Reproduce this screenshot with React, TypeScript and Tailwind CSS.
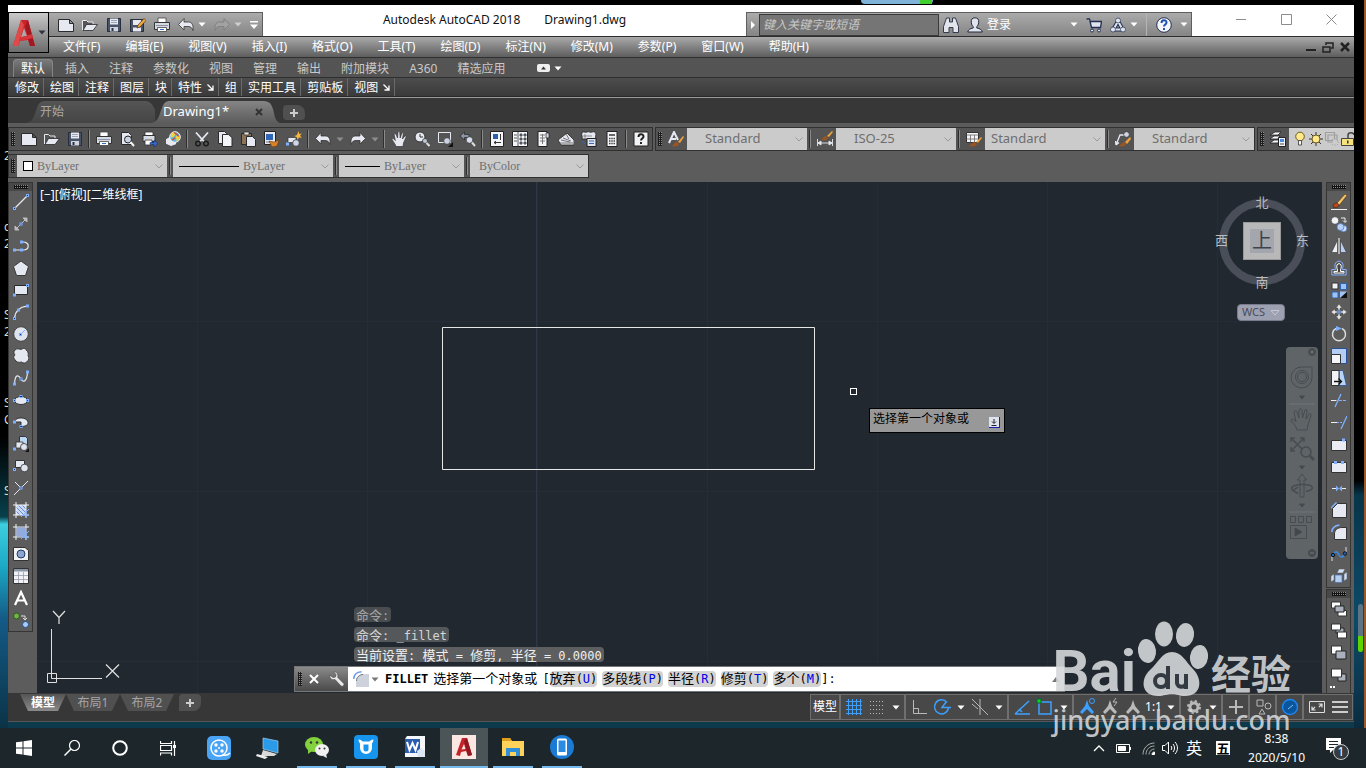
/**
 * CAD 工作區主畫面
 * 包含標題列、功能區、工具列、繪圖區、命令列與系統工作列
 */

import type { ReactNode } from 'react';

const LIGHT = '#e6e9f1';
const BLUE = '#7fb0ff';
const DARK = '#2a2a2a';

// 方形小節點，繪圖工具圖示共用
function Node({ x, y }: { x: number; y: number }) {
  return <rect x={x} y={y} width="2" height="2" fill="#123a8c" stroke={BLUE} strokeWidth="1" />;
}

// 圖示 (16x16)
const icons: Record<string, ReactNode> = {
  new: <path d="M.5 2.500h11l4 4v8H.500zM11.500 2.500v4h4" fill={LIGHT} stroke={DARK} />,
  open: (
    <>
      <path d="M.5 13V3.500h4l1.500 1.500h5v3" fill="#555" stroke={LIGHT} />
      <path d="M1 13.500 4.500 7.500h11L11 13.500z" fill={LIGHT} stroke={DARK} strokeWidth=".8" />
    </>
  ),
  save: (
    <>
      <path d="M1.500 1.500h13v13h-13z" fill="#4a5468" stroke="#262d3b" />
      <path d="M4 1.500h8v6H4z" fill={LIGHT} />
      <path d="M5 3.500h6M5 5.500h6" stroke="#8b93a5" strokeWidth=".8" />
      <path d="M4 10h8v4.500H4z" fill="#cfd4df" />
      <path d="M5.500 11h2v3h-2z" fill="#2b3345" />
    </>
  ),
  saveas: (
    <>
      <path d="M.5 2.500h13v12H.5z" fill="#4a5468" stroke="#262d3b" />
      <path d="M3 3h8v5H3zM3 10.500h8v4H3z" fill={LIGHT} />
      <path d="m7 11 1-3 6-6.500 2 2L10 10z" fill="#f3a93c" stroke="#4b3210" strokeWidth=".7" />
    </>
  ),
  print: (
    <>
      <path d="M4 1h8v5H4z" fill="#fff" stroke="#444" strokeWidth=".8" />
      <path d="M.5 5.500h15v7H.5z" fill="#d5d9e2" stroke="#333" />
      <path d="M2 8.500h12" stroke="#8a92a3" />
      <path d="M3.500 10.500h9v4h-9z" fill="#fff" stroke="#444" strokeWidth=".8" />
      <path d="M6 12.500h4" stroke="#2f6fc4" />
    </>
  ),
  undo: <path d="M6 1.500v3.500h4.500c3.500 0 5 3 4.500 8.500-1-2.500-2-4-5-4H6V13L.5 7.500z" fill={LIGHT} stroke="#333" strokeWidth=".8" />,
  redo: <path d="M10 1.500v3.500H5.500C2 5 .5 8 1 13.500c1-2.500 2-4 5-4h4V13l5.500-5.500z" fill={LIGHT} stroke="#333" strokeWidth=".8" />,
  redoOff: <path d="M10 1.500v3.500H5.500C2 5 .5 8 1 13.500c1-2.500 2-4 5-4h4V13l5.500-5.500z" fill="#a2a2a2" stroke="#7a7a7a" strokeWidth=".8" />,
  preview: (
    <>
      <path d="M2.500 1.500h7l3 3v9h-10z" fill={LIGHT} stroke={DARK} />
      <circle cx="9" cy="8.500" r="3.500" fill="#c9d3e4" stroke="#222" />
      <path d="m11.500 11 3.500 4" stroke="#f2f2f2" strokeWidth="2" />
    </>
  ),
  publish: (
    <>
      <path d="M3 1h8v4H3z" fill="#fff" stroke="#333" strokeWidth=".8" />
      <path d="M1 4.500h12v6H1z" fill="#d5d9e2" stroke="#333" />
      <path d="M3 9h7v5H3z" fill="#fff" stroke="#333" strokeWidth=".8" />
      <path d="M8 11.500h4V9l4 3.500-4 3.500v-2.500H8z" fill="#3568c8" stroke="#12275c" strokeWidth=".5" />
    </>
  ),
  globe: (
    <>
      <path d="m.5 8 5-3 6 2.500v6L6 15.500.5 13z" fill={LIGHT} stroke="#333" strokeWidth=".7" />
      <circle cx="10" cy="6" r="5.300" fill="#58b7e6" stroke="#f5f5f5" />
      <path d="M7 2c3-1 4 2 2 3.500S6 7 5.500 5zM11 5c3-1 4 0 3.500 3l-3 2.500z" fill="#f4d335" />
      <path d="M9 1.500c2 1 4 2 4.500 4M7 9l3-2" stroke="#e0402c" fill="none" strokeWidth="1.300" />
    </>
  ),
  cut: (
    <>
      <path d="M2 1.500 10.500 11M14 1.500 5.500 11" stroke={LIGHT} strokeWidth="1.800" />
      <circle cx="4" cy="12.500" r="2.300" fill="none" stroke="#1c1c1c" strokeWidth="1.500" />
      <circle cx="12" cy="12.500" r="2.300" fill="none" stroke="#1c1c1c" strokeWidth="1.500" />
    </>
  ),
  copy: (
    <>
      <path d="M1.500.5h6l2 2v10h-8z" fill={LIGHT} stroke={DARK} />
      <path d="M5.500 3.500h6l3.500 3v9H5.500z" fill="#f3f5f9" stroke={DARK} />
    </>
  ),
  paste: (
    <>
      <path d="M1.500 2.500h10v11h-10z" fill="#8b7556" stroke={DARK} />
      <path d="M4 1h5v3H4z" fill="#dedede" stroke={DARK} strokeWidth=".7" />
      <path d="M6.500 5.500h6l3 3v7h-9z" fill={LIGHT} stroke={DARK} />
    </>
  ),
  match: (
    <>
      <path d="M1.500.500h11v13h-11z" fill={LIGHT} stroke="#222" />
      <path d="M3 3h7v6H3z" fill="#2e66b5" />
      <path d="M3 11h5" stroke="#456" strokeWidth=".8" />
      <path d="m6 10 5 1 5-2-2 6-5 1z" fill="#d5822b" stroke="#6c3a0c" strokeWidth=".6" />
    </>
  ),
  blockEdit: (
    <>
      <path d="M2 6.500h8v5H2z" fill={LIGHT} stroke="#333" strokeWidth=".7" />
      <circle cx="10" cy="12" r="3.300" fill="#cfd6e6" stroke="#333" strokeWidth=".7" />
      <Node x={0.5} y={12} />
      <path d="m12.500 0 .8 3 2.500-.5-1.800 2.300 2 2-3-.3L11.500 9 11 6.500 8.500 5l2.500-1z" fill="#f6b73c" />
    </>
  ),
  hand: <path d="M5 15.500C4 12 1.500 10 .8 8c1.400-1 2.700 0 3.500 1.500L3 3c1-.8 1.700-.2 2.300.8L6.500 7 7 1c.8-.8 1.700-.5 1.800.5L9.200 7l1.600-5c1-.4 1.700.1 1.500 1L11.500 8l2.300-3c1-.3 1.500.3 1.200 1.200L12.500 12l-.5 3.500z" fill={LIGHT} stroke="#333" strokeWidth=".7" />,
  zoomRt: (
    <>
      <circle cx="6" cy="6" r="5" fill={LIGHT} stroke="#333" />
      <path d="M6 3v3h3" stroke="#333" fill="none" />
      <circle cx="11" cy="10" r="2.500" fill="#bcc5d6" stroke="#333" strokeWidth=".7" />
      <path d="m12.500 12 3 3" stroke="#ddd" strokeWidth="2" />
    </>
  ),
  zoomWin: (
    <>
      <path d="M1.500 1.500h12v10h-12z" fill="none" stroke={LIGHT} />
      <circle cx="10" cy="10" r="3.300" fill="#cbd3e2" stroke="#333" strokeWidth=".7" />
      <path d="M16 11v5h-5z" fill="#111" />
    </>
  ),
  zoomPrev: (
    <>
      <path d="M0 5 4.500 1v2.500H9v3H4.500V9z" fill="#8993a5" stroke="#222" strokeWidth=".7" />
      <circle cx="9.500" cy="9" r="3.300" fill="#d6deec" stroke="#333" strokeWidth=".7" />
      <path d="m12 11.500 3 3.500" stroke="#ddd" strokeWidth="2" />
    </>
  ),
  props: (
    <>
      <path d="M1.500.500h13v15h-13z" fill="#f3f5f9" stroke="#222" />
      <path d="M4 3h5v5H4z" fill="#2a5fae" />
      <path d="M11.500 3v6M5 11.500h7M5 11.500l2-1.500M5 11.500 7 13" stroke="#333" />
    </>
  ),
  center: (
    <>
      <path d="M.5.500h15v15H.500z" fill="#f3f5f9" stroke="#222" />
      <path d="M6 1v14M2 4h3M2 7h3M2 10h3M8 3h2v2H8zM12 3h2v2h-2zM8 7h2v2H8zM12 7h2v2h-2zM8 11h2v2H8zM12 11h2v2h-2z" stroke="#333" fill="#7a93bb" strokeWidth=".8" />
    </>
  ),
  palettes: (
    <>
      <path d="M3 .5h9v15H3z" fill="#f3f5f9" stroke="#222" />
      <path d="M5 4h5M5 7h5M5 10h5M7.500 3v10" stroke="#777" />
      <path d="M11 2h3v5h-3z" fill="#cfd4df" stroke="#222" strokeWidth=".7" />
    </>
  ),
  sheets: (
    <>
      <path d="M0 9 9 2l7 7v5H3z" fill={LIGHT} stroke="#222" strokeWidth=".8" />
      <path d="m3 9 9 2M5 7l8 3M8 3l3 5M1 12h14" stroke="#555" strokeWidth=".8" />
    </>
  ),
  markup: (
    <>
      <path d="M1 1.500C3 0 4 2 6 1s3 1 5 0 4 1 4 2-1 2 0 5H1c1-2-1-4 0-6.500z" fill={LIGHT} stroke="#222" strokeWidth=".8" />
      <path d="M2 5h9M4 3v5" stroke="#666" strokeWidth=".7" />
      <path d="M6 7.500h9v8H6z" fill="#dfe4ee" stroke="#222" />
      <path d="M8 10h5M8 12.500h5M1 10l3 3" stroke="#3768b0" />
    </>
  ),
  calc: (
    <>
      <path d="M3 .5h10v15H3z" fill="#f3f5f9" stroke="#222" />
      <path d="M5 3h6v2H5z" fill="#666" />
      <path d="M5 7.500h6M5 10h6M5 12.500h6" stroke="#444" strokeWidth="1.500" strokeDasharray="1.500 .75" />
    </>
  ),
  help: (
    <>
      <path d="M1 1h14v14H1z" fill="#f1f3f7" stroke="#222" />
      <path d="M5.500 6c0-3.500 5-3.500 5-.5 0 2-2.500 2-2.500 4M8 11v2" stroke="#222" strokeWidth="2" fill="none" />
    </>
  ),
  textStyle: (
    <>
      <path d="M1 12 6 1l4 8M3 8h5" stroke={LIGHT} strokeWidth="2" fill="none" />
      <path d="M4 15c2-1 2-4 5-4l2 2c0 2-4 3-7 2z" fill="#9c5520" />
      <path d="m10 11 5-6 1 1-4 6z" fill="#f0a23a" />
    </>
  ),
  dimStyle: (
    <>
      <path d="M.5 8v7M15.500 8v7M1 12h14M1 12l3-2v4zM15 12l-3-2v4z" stroke={LIGHT} fill={LIGHT} strokeWidth=".9" />
      <path d="M4 9c2-1 2-4 5-4l2 2c0 2-4 3-7 2z" fill="#9c5520" />
      <path d="m10 5 5-5 1 1-4 5z" fill="#f0a23a" />
    </>
  ),
  tableStyle: (
    <>
      <path d="M.5 1.500h12v10H.5z" fill="#f3f5f9" stroke="#333" />
      <path d="M.5 4h12M.5 8h12M4.500 4v7.500M8.500 4v7.500" stroke="#666" strokeWidth=".8" />
      <path d="M3 15c2-1 3-4 6-4l2 2c0 2-5 3-8 2z" fill="#9c5520" />
      <path d="m10 11 5-5 1 1-4 5z" fill="#f0a23a" />
    </>
  ),
  leaderStyle: (
    <>
      <path d="M1 14 5 4h6M1 14l-.5-4M1 14l3-2.500" stroke={LIGHT} strokeWidth="1.300" fill="none" />
      <circle cx="11.500" cy="3.500" r="2.800" fill="#cfd4df" stroke="#333" strokeWidth=".7" />
      <path d="M4 15c2-1 3-4 5-4l2 2c0 2-4 3-7 2z" fill="#9c5520" />
      <path d="m10 11 5-5 1 2-4 5z" fill="#f0a23a" />
    </>
  ),
  layers: (
    <>
      <path d="m0 4 5-3h6l-3 3zM0 8l4-3h6L8 8zM0 12l4-3h5l-1 3z" fill="#f3f5f9" stroke="#222" strokeWidth=".8" />
      <path d="M8.500 6.500h7v9h-7z" fill="#f3f5f9" stroke="#222" />
      <path d="M10 8h4v3h-4z" fill="#4d8be0" />
      <path d="M10 13h4" stroke="#444" />
    </>
  ),
  bulb: (
    <>
      <circle cx="8" cy="5.500" r="4.300" fill="#ffe98a" stroke="#6b5a1c" />
      <path d="M6.500 9.500h3V14h-3z" fill="#f5f5f5" stroke="#333" strokeWidth=".8" />
    </>
  ),
  sun: (
    <>
      <path d="M8 1v14M1 8h14M3 3l10 10M13 3 3 13" stroke="#333" />
      <circle cx="8" cy="8" r="4" fill="#ffe98a" stroke="#6b5a1c" />
    </>
  ),
  freeze: (
    <>
      <path d="M1.500 1.500h9v8h-9zM4 4h9v7H4z" fill="none" stroke="#a0a0a0" strokeWidth="1.200" />
      <path d="M11 7v8M7 11h8M8 8l6 6M14 8l-6 6" stroke="#a9a9a9" />
      <circle cx="11" cy="11" r="2.500" fill="#ccc" />
    </>
  ),
  lock: (
    <>
      <path d="M8 7V4c0-3 6-3 6 0" stroke="#444" fill="none" strokeWidth="1.500" />
      <path d="M1.500 7.500h12v7h-12z" fill="#f8e27b" stroke="#444" />
      <path d="M7 9.500h1.500v3H7z" fill="#333" />
    </>
  ),
  line: (
    <>
      <path d="M2 14 14 2" stroke={LIGHT} strokeWidth="1.200" />
      <Node x={0.5} y={13.5} /><Node x={13.5} y={0.5} />
    </>
  ),
  xline: (
    <>
      <path d="M2 14 14 2M14 2h-4l4 4zM2 14v-4l4 4z" stroke="#bcbcbc" fill="#bcbcbc" />
      <Node x={7} y={7} />
    </>
  ),
  pline: (
    <>
      <path d="M1 12h9c7 0 7-8 0-8H8" stroke={LIGHT} fill="none" strokeWidth="1.200" />
      <Node x={0.5} y={11} /><Node x={7.5} y={11} /><Node x={7.5} y={3} />
    </>
  ),
  polygon: <path d="m8 1 7.500 5.500-3 9h-9l-3-9z" fill="#e4e8f1" stroke="#3a3a3a" />,
  rect: (
    <>
      <path d="M1.500 3.500h13v9h-13z" fill="#e4e8f1" stroke={DARK} />
      <Node x={0.5} y={12} /><Node x={13.5} y={2.5} />
    </>
  ),
  arc: (
    <>
      <path d="M1.500 14.500C2 8 6 3 14.500 2" stroke={LIGHT} fill="none" strokeWidth="1.200" />
      <Node x={0.5} y={13.5} /><Node x={4.5} y={5} /><Node x={13.5} y={1} />
    </>
  ),
  circle: (
    <>
      <circle cx="8" cy="8" r="7.300" fill="#dfe4ee" stroke="#444" />
      <path d="m8 8 4-4" stroke={BLUE} />
      <Node x={6.5} y={7.5} />
    </>
  ),
  cloud: <path d="M2 2c2-2 4-1 6-.5 2-1.500 5-1.500 5.500 1C15.500 4 15.500 6 15 7.500c1.500 2 1 5-1 6-1.500 2-4 2-5.500.5-2.500 1-6 0-6.500-2.500-2-1.500-1.500-3 0-4.500C.500 5 .500 3 2 2z" fill="#e4e8f1" stroke="#3a3a3a" />,
  spline: (
    <>
      <path d="M1.500 14C2 3 6 5 8 9s6 3 6.500-7" stroke={LIGHT} fill="none" strokeWidth="1.200" />
      <Node x={0.5} y={13} /><Node x={7} y={8} /><Node x={13.5} y={1} />
    </>
  ),
  ellipse: (
    <>
      <ellipse cx="8" cy="8.500" rx="6.500" ry="4" fill="#e4e8f1" stroke="#333" />
      <Node x={0.5} y={7.5} /><Node x={13.5} y={7.5} /><Node x={7} y={3.5} />
    </>
  ),
  ellipseArc: (
    <>
      <path d="M2 8c0-6 13-5 13 .5 0 3-3 4-7 4V8z" fill="#e4e8f1" stroke="#333" />
      <Node x={0.5} y={7} /><Node x={7} y={11.5} />
    </>
  ),
  insert: (
    <>
      <path d="M6.500.5h6l2 2v8h-8z" fill="#bcd8f5" stroke="#334" />
      <path d="M3 6h7v6H3z" fill="#e4e8f1" stroke="#333" strokeWidth=".8" />
      <circle cx="11" cy="11" r="3.500" fill="#dfe4ee" stroke="#333" strokeWidth=".8" />
      <Node x={0.5} y={12} />
      <path d="M16 12v4h-4z" fill="#111" />
    </>
  ),
  block: (
    <>
      <path d="M2.500 2.500h9v7h-9z" fill="#e4e8f1" stroke="#333" />
      <circle cx="11.500" cy="10" r="3.800" fill="#dfe4ee" stroke="#333" strokeWidth=".8" />
      <Node x={0.5} y={10.5} />
    </>
  ),
  point: (
    <>
      <path d="M2 2l7 7M15 1 1 15" stroke={LIGHT} />
      <Node x={7} y={7} />
    </>
  ),
  hatch: (
    <>
      <path d="M3 3h10v10H3z" fill="#cbdaf7" />
      <path d="m3 5 8 8M5 3l8 8M3 9l4 4M9 3l4 4" stroke="#4f78c4" strokeWidth=".8" />
      <path d="M3 0v16M13 0v16M0 3h16M0 13h16" stroke="#f5f5f5" />
      <path d="m8 15 8-8M13 8v8M9 13h7" stroke={BLUE} />
    </>
  ),
  gradient: (
    <>
      <path d="M3 3h10v10H3z" fill="#93abdc" stroke="#1c315c" />
      <path d="M3 0v16M13 0v16M0 3h16M0 13h16" stroke="#f5f5f5" />
      <path d="m8 15 8-8M13 8v8M9 13h7" stroke={BLUE} />
    </>
  ),
  region: (
    <>
      <path d="M.5 1.500h11.500l3.500 3v10H.500z" fill="#f0f2f6" stroke="#333" />
      <circle cx="8" cy="8" r="4" fill="#8da5d1" stroke="#243a66" />
    </>
  ),
  table: (
    <>
      <path d="M.5.500h15v15H.5z" fill="#f0f2f6" stroke="#333" />
      <path d="M1 1h14v2.500H1z" fill="#8a94a8" />
      <path d="M1 7.500h14M1 11.500h14M5.500 4v11M10.500 4v11" stroke="#99a" strokeWidth=".8" />
    </>
  ),
  mtext: <path d="M2 15 8 2l6 13M4.500 10.500h7" stroke="#fff" strokeWidth="2.200" fill="none" />,
  addSel: (
    <>
      <circle cx="3.500" cy="4" r="3" fill="#6fb34a" stroke="#2c5a17" />
      <circle cx="12.500" cy="12.500" r="3" fill="#a9ccf5" stroke="#28518c" />
      <path d="M8 4h4v4M10 6l2 2 2-2" stroke="#ddd" fill="none" />
    </>
  ),
  erase: (
    <>
      <path d="M0 15.500h16" stroke="#eee" />
      <path d="M2 13c0-3 2-4 4-4l2 2c0 2-3 3-6 2z" fill="#c34a1a" stroke="#3a1508" strokeWidth=".6" />
      <path d="m6 9 8-9 2 1.500L8.500 11z" fill="#f5c46a" stroke="#4b3210" strokeWidth=".6" />
    </>
  ),
  copyObj: (
    <>
      <circle cx="4" cy="4.500" r="3.800" fill="#f0f2f6" stroke="#444" strokeWidth=".7" />
      <circle cx="12.500" cy="12.500" r="3.300" fill="#cfe0f9" stroke="#4373bd" strokeWidth=".7" />
      <circle cx="9.500" cy="11" r="3.500" fill="#b5cff7" stroke="#4373bd" strokeWidth=".7" />
      <path d="M10 2h4v4M12 4.500l2 2 2-2" stroke="#eee" fill="none" />
    </>
  ),
  mirror: (
    <>
      <path d="M6.500 2v12.500H.5z" fill="#eceff5" stroke="#444" strokeWidth=".7" />
      <path d="M9.500 2v12.500h6z" fill="#b9d0f4" stroke="#444" strokeWidth=".7" />
      <path d="M8 0v16" stroke="#fff" />
    </>
  ),
  offset: (
    <>
      <path d="M.8 15V9.500h3.700c0-2-1-2.500-.5-5 1-4.500 7-4.500 8 0 .5 2.500-.5 3-.5 5h3.700V15z" fill="none" stroke={BLUE} />
      <path d="M3 13v-1.500h3.500c.5-2-1.500-4-.5-6.500 1-1.800 3-1.800 4 0 1 2.500-1 4.500-.5 6.500H13V13z" fill="#444" stroke="#fff" />
    </>
  ),
  array: (
    <>
      <path d="M1 1h6v6H1z" fill="#f0f2f6" stroke="#333" />
      <path d="M9.500 1.500h6v6h-6zM1 10h6v6H1z" fill="#9fc2f6" stroke="#2d62b4" />
      <path d="M9 16V9.500h7z" fill="#9fc2f6" /><path d="M16 10v6H9.500z" fill="#111" />
    </>
  ),
  move: (
    <>
      <path d="m8 0 3 4H9v2H7V4H5zM8 16l3-4H9v-2H7v2H5zM0 8l4-3v2h2v2H4v2zM16 8l-4-3v2h-2v2h2v2z" fill="#e5e5e5" stroke="#444" strokeWidth=".4" />
      <Node x={7} y={7} />
    </>
  ),
  rotate: (
    <>
      <path d="M11 2.500A6.500 6.500 0 1 1 5 2.500" stroke="#ddd" strokeWidth="1.500" fill="none" />
      <path d="m5 0 6 2.500L5 5z" fill={BLUE} />
    </>
  ),
  scale: (
    <>
      <path d="M.5.5h15v15H.5z" fill="#b5cdf3" stroke="#274f96" />
      <path d="M.5 6.500h9v9h-9z" fill="#f4f5f8" stroke="#333" />
    </>
  ),
  stretch: (
    <>
      <path d="M8 .5h4l3.500 15H8z" fill="#b5d3f6" stroke="#274f96" strokeWidth=".8" />
      <path d="M.5.500h7.500v15H.5z" fill="#f0f2f6" stroke="#333" />
      <path d="M3 11.500h7M7.500 8.500l3 3-3 3" stroke="#111" fill="none" strokeWidth="1.300" />
    </>
  ),
  trim: <><path d="M0 8.500h5.500" stroke="#eee" /><path d="M4 15 10 2" stroke={BLUE} strokeWidth="1.300" /><path d="M8 8.500h8" stroke={BLUE} strokeDasharray="3 1" /></>,
  extend: <><path d="M0 8.500h6" stroke="#eee" /><path d="M6 8.500h5" stroke={BLUE} strokeDasharray="2 1" /><path d="m10 15 6-13" stroke={BLUE} strokeWidth="1.300" /></>,
  breakPt: <><path d="M.5 4.500h15v10H.5z" fill="#e9ecf3" stroke="#333" /><path d="M11 2.500h3v3h-3z" fill={BLUE} /></>,
  breakObj: <><path d="M.5 4.500h15v10H.5z" fill="#e9ecf3" stroke="#333" /><path d="M3 3h3v3H3zM10 3h3v3h-3z" fill={BLUE} /></>,
  join: <><path d="M1 8.500h4M11 8.500h4" stroke="#eee" /><path d="m5 5.500 3 3 3-3v6l-3-3-3 3z" fill={BLUE} /></>,
  chamfer: <><path d="M6.500 1.500h9v14H1.500v-9z" fill="#e6e9f1" stroke="#333" /><path d="m0 6 5.500-5.500" stroke={BLUE} strokeWidth="1.500" /></>,
  fillet: <><path d="M11 3.500h4.500v12h-12V10c0-4 3-6.500 7.500-6.500z" fill="#e6e9f1" stroke="#333" /><path d="M.8 8C1 3.500 4 1.500 8.500 1" stroke={BLUE} strokeWidth="1.600" fill="none" /></>,
  // 命令列前的淺色版本
  filletCmd: <><path d="M10 3h6v13H3V10c0-4 3-7 7-7z" fill="#cdd2dc" /><path d="M3.500 10c0-3.500 3-6.500 6.500-6.500" stroke="#6f7684" fill="none" /><path d="M.8 8C1 3.500 4 1 8.500.800" stroke="#6a9be8" strokeWidth="1.400" fill="none" /></>,
  blend: (
    <>
      <path d="M1 15V9M15 7V1" stroke="#ddd" />
      <path d="M2 9c3-6 5-2 6 0s4 4 6-2" stroke="#3b8fe6" fill="none" strokeWidth="1.400" />
      <circle cx="2" cy="9" r="1.700" fill="#2267c7" stroke="#111" /><circle cx="14" cy="7.500" r="1.700" fill="#2267c7" stroke="#111" />
    </>
  ),
  explode: (
    <>
      <path d="M6 5 8 1h6l-2 4zM0 8l3-2v6l-3 2zM13 6l3-2v7l-3 2z" fill="#cfe0f7" stroke="#555" strokeWidth=".5" />
      <path d="M4 7h7v7.500H4z" fill="#b5cdf0" stroke="#4a6ea8" strokeWidth=".7" />
    </>
  ),
  orderA: <><path d="M.5 1h9v6h-9z" fill="#fff" stroke="#333" /><path d="M7 9.500h8.500V15H7z" fill="#fff" stroke="#333" /><path d="M4 5h9v6H4z" fill="#aab0bc" stroke="#222" /></>,
  orderB: <><path d="M5 5h8v5H5z" fill="#aab0bc" stroke="#222" /><path d="M.5 1h9v6h-9zM6.500 9h9v6h-9z" fill="#fff" stroke="#333" /></>,
  orderC: <><path d="M.5 1h10v8h-10z" fill="#fff" stroke="#333" /><path d="M5 6h10v8H5z" fill="#aab0bc" stroke="#222" /></>,
  orderD: <><path d="M7 7h8v7H7z" fill="#aab0bc" stroke="#222" /><path d="M.5 2h10v8h-10z" fill="#fff" stroke="#333" /></>,
  binoculars: <path d="M3.500 1h3v4h3V1h3l3 8.500v6H10v-5H6v5H.500v-6z" fill="#e2e5ec" stroke="#333b4d" />,
  user: <path d="M8 .8c3 0 4 2 3.700 4.500C11.500 8 10.500 9 9.800 9.500v1.500c3 .5 4.700 1.500 5.500 4H.7c.8-2.500 2.500-3.500 5.500-4V9.500C5.500 9 4.500 8 4.300 5.300 4 2.800 5 .8 8 .8z" fill="#dfe4ef" stroke="#23293a" />,
  cart: <><path d="M.5 2h3l2 8.500h9l1-6H4.500" fill="#dfe4ef" stroke="#232f52" strokeWidth="1.300" /><circle cx="6" cy="13.500" r="1.500" fill="#dfe4ef" stroke="#232f52" /><circle cx="13" cy="13.500" r="1.500" fill="#dfe4ef" stroke="#232f52" /></>,
  a360: (
    <>
      <path d="M8 4 3.500 12.500h9z" fill="none" stroke="#232f52" strokeWidth="4" strokeLinejoin="round" />
      <path d="M8 4 3.500 12.500h9z" fill="none" stroke="#dfe4ef" strokeWidth="2" strokeLinejoin="round" />
      <g fill="#dfe4ef" stroke="#232f52" strokeWidth=".7"><circle cx="8" cy="3.500" r="2.500" /><circle cx="3" cy="12.500" r="2.500" /><circle cx="13" cy="12.500" r="2.500" /></g>
    </>
  ),
  infoHelp: <><circle cx="8" cy="8" r="7.300" fill="#f4f6fb" stroke="#232f52" /><path d="M5.500 6c0-3.500 5-3.500 5-.5 0 2-2.500 2-2.500 4M8 11v2" stroke="#1f4fb0" strokeWidth="2" fill="none" /></>,
};

function Icon({ name, className = 'size-4' }: { name: string; className?: string }) {
  return (
    <svg viewBox="0 0 16 16" className={`${className} shrink-0`} aria-hidden="true">
      {icons[name]}
    </svg>
  );
}

function Caret({ className = 'fill-white' }: { className?: string }) {
  return (
    <svg viewBox="0 0 8 5" className={`h-[5px] w-2 shrink-0 ${className}`} aria-hidden="true">
      <path d="M.5.5h7L4 4.500z" />
    </svg>
  );
}

function ToolButton({ name, className = 'h-6 w-[23px]' }: { name: string; className?: string }) {
  return (
    <button type="button" aria-label={name} className={`flex shrink-0 items-center justify-center ${className}`}>
      <Icon name={name} />
    </button>
  );
}

// 工具列拖曳把手
function Grip() {
  return <span className="mx-[2px] h-[14px] w-1 shrink-0 bg-[conic-gradient(#8a8a8a_25%,#1d1d1d_0)] bg-[size:2px_2px]" />;
}

function Sep() {
  return <span className="mx-[2px] h-[18px] w-[2px] shrink-0 border-l border-[#2e2e2e] bg-[#8a8a8a]" />;
}

interface ComboProps {
  label: string;
  value: string;
  width: string;
  swatch?: ReactNode;
  font?: string;
}

// 下拉選單
function Combo({ label, value, width, swatch, font = 'text-[13px]' }: ComboProps) {
  return (
    <label className={`flex h-[22px] shrink-0 items-center bg-[#cbcbcb] pr-1 pl-[6px] text-[#6e6e6e] ${width}`}>
      {swatch}
      <select aria-label={label} className={`min-w-0 flex-1 appearance-none bg-transparent ${font}`}>
        <option>{value}</option>
      </select>
      <svg viewBox="0 0 8 5" className="h-[5px] w-2 fill-none stroke-[#9a9a9a]"><path d="m.5.500 3.500 3.500L7.500.500" /></svg>
    </label>
  );
}

const quickTools = ['new', 'open', 'save', 'saveas', 'print', 'undo'];

function TitleBar() {
  return (
    <header className="relative flex h-8 items-end border-b border-[#2d2d2d] bg-white pl-10">
      {/* 應用程式按鈕，跨越標題列與選單列 */}
      <button type="button" aria-label="AutoCAD" className="absolute top-[7px] left-0 z-10 flex h-[41px] w-[41px] items-center justify-center gap-[2px] border border-black bg-linear-to-b from-[#c9c9c9] to-[#6d6d6d]">
        <svg viewBox="0 0 24 28" className="h-7 w-6">
          <path d="M9 1h7l7 26h-5l-2-6-8 1-2 5H1z" fill="#c8242c" />
          <path d="m9 1 3 5-6 21H1z" fill="#e24a4a" />
          <path d="m12 9 3 8-6 1z" fill="#a9a9a9" />
          <path d="m16 1 7 26h-5l-5-20z" fill="#a31820" />
          <path d="m8 22-1-3 13-4 1 4z" fill="#d8353b" />
        </svg>
        <Caret className="fill-[#2d3440]" />
      </button>
      <div className="flex h-6 w-[215px] items-center gap-2 border-t border-r border-[#5e5e5e] bg-linear-to-b from-[#ababab] to-[#858585] pl-[10px]">
        {quickTools.map((t) => <ToolButton key={t} name={t} className="w-4" />)}
        <span className="-ml-1"><Caret /></span>
        <ToolButton name="redoOff" className="w-4" />
        <span className="-ml-1"><Caret className="fill-[#cfcfcf]" /></span>
        <svg viewBox="0 0 8 8" className="size-2 fill-white"><path d="M0 0h8v1.500H0zM0 3.500h8L4 8z" /></svg>
      </div>
      <h1 className="flex h-full flex-1 justify-center gap-6 pt-[5px] text-[12px] leading-[20px] whitespace-nowrap text-[#111]">
        <span>Autodesk AutoCAD 2018</span>
        <span>Drawing1.dwg</span>
      </h1>
      <div className="flex h-6 items-center border-t border-r border-l border-[#5e5e5e] bg-linear-to-b from-[#ababab] to-[#858585] text-[12px] text-white">
        <svg viewBox="0 0 12 8" className="h-2 w-3 fill-white"><path d="M4 0l4 4-4 4z" /></svg>
        <input type="text" aria-label="搜索" placeholder="键入关键字或短语" className="h-[22px] w-[180px] border border-[#3a3a3a] bg-[#757575] px-[3px] italic placeholder:text-[#c9c9c9]" />
        <div className="flex items-center gap-2 pl-1">
          <Icon name="binoculars" />
          <Icon name="user" />
          <button type="button" className="-ml-1">登录</button>
        </div>
        <div className="flex items-center pl-[59px]">
          <Caret />
          <span className="flex w-6 justify-end"><Icon name="cart" /></span>
          <span className="flex w-6 justify-end"><Icon name="a360" /></span>
          <span className="pl-1"><Caret /></span>
        </div>
        <div className="ml-2 flex h-full items-center gap-1 border-l border-[#b5b5b5] pr-[3px] pl-[9px]">
          <Icon name="infoHelp" />
          <span className="pl-1"><Caret /></span>
        </div>
      </div>
      <div className="flex h-full items-center pb-[3px] pl-[27px]">
        {['M0 5.500h10', 'M.5.500h10v10H.500z', 'm.5.500 10 10M10.500.500l-10 10'].map((d, i) => (
          <button key={d} type="button" aria-label={['最小化', '最大化', '关闭'][i]} className="flex h-6 w-[45px] items-center justify-center">
            <svg viewBox="0 0 11 11" className="size-[11px] fill-none stroke-[#8c8c8c]"><path d={d} /></svg>
          </button>
        ))}
      </div>
    </header>
  );
}

const menus = ['文件(F)', '编辑(E)', '视图(V)', '插入(I)', '格式(O)', '工具(T)', '绘图(D)', '标注(N)', '修改(M)', '参数(P)', '窗口(W)', '帮助(H)'];

function MenuBar() {
  return (
    <nav className="flex h-[21px] items-center gap-[25px] border-b border-[#303030] bg-linear-to-b from-[#aaaaaa] to-[#5e5e5e] pr-1 pl-[55px] text-[12px] whitespace-nowrap text-white">
      {menus.map((m) => <button key={m} type="button">{m}</button>)}
      <div className="ml-auto flex items-center gap-[6px] text-[#222]">
        <svg viewBox="0 0 10 11" className="h-[11px] w-[10px] fill-[#222]"><path d="M0 7h10v2H0z" /></svg>
        <svg viewBox="0 0 12 11" className="h-[11px] w-3 fill-none stroke-[#222] stroke-2"><path d="M4 3V1h7v5H9M1 5h7v5H1z" strokeWidth="1.500" /></svg>
        <svg viewBox="0 0 10 10" className="size-[10px] fill-none stroke-[#222]"><path d="m1 1 8 8M9 1 1 9" strokeWidth="2.500" /></svg>
      </div>
    </nav>
  );
}

const ribbonTabs = ['默认', '插入', '注释', '参数化', '视图', '管理', '输出', '附加模块', 'A360', '精选应用'];
const ribbonPanels = ['修改', '绘图', '注释', '图层', '块', '特性', '组', '实用工具', '剪贴板', '视图'];

function Ribbon() {
  return (
    <section className="border-b border-[#9a9a9a]">
      <div className="flex h-5 items-end border-b border-[#2e2e2e] bg-[#545454] pl-[5px] text-[12px] whitespace-nowrap text-[#c9c9c9]">
        {ribbonTabs.map((t, i) => (
          <button
            key={t}
            type="button"
            className={i === 0
              ? 'mr-[2px] h-[18px] rounded-t-sm border border-b-0 border-[#858585] bg-linear-to-b from-[#7a7a7a] to-[#505050] px-[7px] leading-[18px] text-white'
              : 'h-[18px] px-[10px] leading-[20px]'}
          >
            {t}
          </button>
        ))}
        <span className="flex h-[18px] items-center gap-1 pl-[22px]">
          <svg viewBox="0 0 13 8" className="h-2 w-[13px]"><rect width="13" height="8" rx="2" fill="#eee" /><path d="m4 5.500 2.500-3L9 5.500z" fill="#333" /></svg>
          <Caret />
        </span>
      </div>
      <div className="flex h-[19px] items-center border-b border-[#282828] bg-linear-to-b from-[#4d4d4d] to-[#3a3a3a] pl-[1px] text-[12px] whitespace-nowrap text-white">
        {ribbonPanels.map((p, i) => (
          <button key={p + i} type="button" className="flex h-[18px] items-center gap-[5px] border-r border-[#6a6a6a] pt-[1px] pr-[4px] pl-[6px]">
            {p}
            {(i === 5 || i === 9) && <svg viewBox="0 0 7 7" className="size-[7px]"><path d="m.5.500 5 5M6 1.500V6H1.500" stroke="#fff" strokeWidth="1.300" fill="none" /></svg>}
          </button>
        ))}
      </div>
    </section>
  );
}

function FileTabs() {
  return (
    <div className="flex h-[25px] items-end bg-[#373737] pl-[18px] text-[12px]">
      <button type="button" className="h-[22px] w-[134px] bg-linear-to-b from-[#555] to-[#454545] pl-[14px] text-left text-[#a9a9a9] [clip-path:path('M0,22C8,21,8,14,11,7C13,1,15,0,20,0H118C124,0,126,2,129,9V22Z')]">
        开始
      </button>
      <button type="button" className="-ml-2 flex h-[22px] w-[128px] items-center bg-linear-to-b from-[#858585] to-[#5c5c5c] pl-[11px] text-[13px] text-white [clip-path:path('M0,22C7,20,7,14,10,7C12,1,14,0,19,0H110C117,0,119,2,121,8C123,16,123,20,128,22Z')]">
        Drawing1*
        <svg viewBox="0 0 8 8" className="ml-auto mr-[17px] size-2 stroke-[#333] stroke-2"><path d="m1 1 6 6M7 1 1 7" /></svg>
      </button>
      <button type="button" aria-label="新图形" className="mb-[3px] ml-[3px] flex h-[15px] w-[22px] items-center justify-center rounded-tl-sm rounded-tr-lg rounded-b bg-[#505050]">
        <svg viewBox="0 0 8 8" className="size-2 stroke-[#ccc] stroke-2"><path d="M4 0v8M0 4h8" /></svg>
      </button>
    </div>
  );
}

const standardTools = [
  ['new', 'open', 'save'],
  ['print', 'preview', 'publish', 'globe'],
  ['cut', 'copy', 'paste', 'match', 'blockEdit'],
  ['undo', '>', 'redo', '>'],
  ['hand', 'zoomRt', 'zoomWin', 'zoomPrev'],
  ['props', 'center', 'palettes', 'sheets', 'markup', 'calc'],
  ['help'],
];

const styleCombos = [
  { icon: 'textStyle', label: '文字样式', value: 'Standard', pad: 'pl-3' },
  { icon: 'dimStyle', label: '标注样式', value: 'ISO-25', pad: 'pl-3' },
  { icon: 'tableStyle', label: '表格样式', value: 'Standard', pad: '' },
  { icon: 'leaderStyle', label: '多重引线样式', value: 'Standard', pad: 'pl-3' },
];

const box = 'flex h-6 shrink-0 items-center border border-[#303030] bg-[#545454]';

function Toolbars() {
  return (
    <div className="flex flex-col gap-[3px] overflow-hidden bg-[#5c5c5c] pt-1 pb-1">
      <div className="flex gap-[2px]">
        <div className={box}>
          <Grip />
          {standardTools.map((group, g) => (
            <div key={g} className="flex items-center">
              {g > 0 && <Sep />}
              {group.map((t, i) => t === '>'
                ? <span key={i} className="flex w-3 justify-center"><Caret className="fill-[#8d8d8d]" /></span>
                : <ToolButton key={t} name={t} />)}
            </div>
          ))}
        </div>
        <div className={box}>
          <Grip />
          {styleCombos.map((c, i) => (
            <div key={c.icon} className="flex items-center">
              {i > 0 && <Sep />}
              <ToolButton name={c.icon} className="h-[22px] w-[23px]" />
              <Combo label={c.label} value={c.value} width="w-[120px]" font={`text-[13px] ${c.pad}`} />
            </div>
          ))}
        </div>
        <div className={box}>
          <Grip />
          <ToolButton name="layers" className="h-[22px] w-[23px]" />
          <div className="flex h-[22px] w-[90px] items-center bg-[#cbcbcb] pl-[3px]">
            {['bulb', 'sun', 'freeze', 'lock'].map((t) => <ToolButton key={t} name={t} className="w-4" />)}
          </div>
        </div>
      </div>
      <div className={`${box} self-start font-['Liberation_Serif','Noto_Sans_CJK_SC',serif]`}>
        <Grip />
        <Combo label="颜色" value="ByLayer" width="w-[150px]" font="pl-1 text-[12px]" swatch={<span className="size-[10px] border border-black bg-white" />} />
        <Sep />
        <Combo label="线型" value="ByLayer" width="w-[160px]" font="pl-1 text-[12px]" swatch={<span className="h-px w-[60px] bg-black" />} />
        <Sep />
        <Combo label="线宽" value="ByLayer" width="w-[125px]" font="pl-1 text-[12px]" swatch={<span className="h-px w-[35px] bg-black" />} />
        <Sep />
        <Combo label="打印样式" value="ByColor" width="w-[118px]" font="pl-[3px] text-[12px]" />
      </div>
    </div>
  );
}

const drawTools = ['line', 'xline', 'pline', 'polygon', 'rect', 'arc', 'circle', 'cloud', 'spline', 'ellipse', 'ellipseArc', 'insert', 'block', 'point', 'hatch', 'gradient', 'region', 'table', 'mtext', 'addSel'];
const modifyTools = ['erase', 'copyObj', 'mirror', 'offset', 'array', 'move', 'rotate', 'scale', 'stretch', 'trim', 'extend', 'breakPt', 'breakObj', 'join', 'chamfer', 'fillet', 'blend', 'explode'];
const orderTools = ['orderA', 'orderB', 'orderC', 'orderD'];

function VerticalBar({ tools, more = false }: { tools: string[]; more?: boolean }) {
  return (
    <div className={`flex w-[25px] shrink-0 flex-col items-center border border-[#353535] bg-[#5c5c5c] ${more ? 'grow border-b-0' : ''}`}>
      <span className="flex h-2 w-full items-center justify-center bg-[#484848]">
        <span className="h-1 w-[14px] bg-[conic-gradient(#8a8a8a_25%,#111_0)] bg-[size:2px_2px]" />
      </span>
      {tools.map((t) => <ToolButton key={t} name={t} className="h-[22px] w-[22px]" />)}
      {more && <span className="mr-3 h-[2px] w-[5px] border-x-2 border-white" />}
    </div>
  );
}

const CJK = /([\u4e00-\u9fff]+)/;

// 命令列文字：英數使用等寬字，中文字級略大
function CommandText({ text }: { text: string }) {
  return (
    <>
      {text.split(CJK).map((part, i) => (
        <span key={i} className={CJK.test(part) ? 'text-[13px]' : 'text-[12px]'}>{part}</span>
      ))}
    </>
  );
}

const history = [
  { text: '命令:', tone: 'bg-[#494d50] text-[#a5a5a5]' },
  { text: '命令: _fillet', tone: 'bg-[#55585a] text-[#d5d5d5]' },
  { text: '当前设置: 模式 = 修剪, 半径 = 0.0000', tone: 'bg-[#5c5e60] text-[#f0f0f0]' },
];

const options = [['放弃', 'U'], ['多段线', 'P'], ['半径', 'R'], ['修剪', 'T'], ['多个', 'M']];

function CommandLine() {
  return (
    <div className="absolute bottom-[1px] left-[257px] w-[771px] font-['DejaVu_Sans_Mono','Noto_Sans_CJK_SC',monospace]">
      <div className="flex flex-col items-start gap-[5px] pb-1 pl-[60px]">
        {history.map((h) => (
          <p key={h.text} className={`h-[15px] rounded-sm px-[2px] leading-[15px] whitespace-pre ${h.tone}`}>
            <CommandText text={h.text} />
          </p>
        ))}
      </div>
      <div className="flex h-[26px] items-center border border-[#777] bg-white whitespace-pre text-black">
        <div className="flex h-full w-[53px] shrink-0 items-center bg-linear-to-b from-[#8b8b8b] to-[#4a4a4a] pl-[1px]">
          <Grip />
          <svg viewBox="0 0 10 10" className="ml-[5px] size-[10px] shrink-0 stroke-white stroke-2"><path d="m1 1 8 8M9 1 1 9" /></svg>
          <svg viewBox="0 0 16 16" className="ml-[10px] size-4 shrink-0"><path d="M4.500.800 7 3.500 6.500 6 4 6.500.800 4C.500 7.500 3 9.500 6 8.500l6 6.500c2 1 3.500-.5 2.800-2.500L8.800 6.500C9.500 3 7.500.500 4.500.800z" fill="#e8e8e8" stroke="#444" strokeWidth=".6" /></svg>
        </div>
        <span className="flex items-center pl-[5px]"><Icon name="filletCmd" /><Caret className="ml-[2px] fill-[#777]" /></span>
        <label htmlFor="command" className="flex items-center pl-[6px] leading-[20px]">
          <b className="pr-[5px] text-[12px]">FILLET</b>
          <CommandText text="选择第一个对象或" />
          <span className="pl-[5px] text-[12px]">[</span>
          <span className="flex gap-[5px]">
            {options.map(([name, key]) => (
              <span key={key} className="h-4 rounded bg-[#d2d2d2] text-[12px] leading-4">
                <CommandText text={name} />(<span className="text-[#0000e6]">{key}</span>)
              </span>
            ))}
          </span>
          <span className="text-[12px]">]:</span>
        </label>
        <input id="command" type="text" className="min-w-0 flex-1 pl-1 text-[12px] outline-none" />
        <svg viewBox="0 0 8 5" className="mr-1 h-[5px] w-2 fill-[#777]"><path d="M0 5h8L4 0z" /></svg>
      </div>
    </div>
  );
}

function ViewCube() {
  return (
    <div className="absolute top-2 right-3 flex w-24 flex-col items-center text-[13px] text-[#b9bcc0]">
      <svg viewBox="0 0 96 96" className="absolute top-1 left-0 size-24" aria-hidden="true">
        <circle cx="48" cy="48" r="39" fill="none" stroke="#494e58" strokeWidth="8" />
      </svg>
      <span className="relative leading-[24px]">北</span>
      <div className="relative flex h-[54px] w-full items-center justify-between px-[1px]">
        <span>西</span>
        <span className="flex size-[38px] items-center justify-center border border-[#999] bg-[#b8b8b8]">
          <span className="flex size-6 items-center justify-center bg-[#a3a6ad] text-[20px] leading-none text-[#3c434d]">上</span>
        </span>
        <span>东</span>
      </div>
      <span className="relative leading-[28px]">南</span>
      <button type="button" className="mt-2 mr-[2px] flex h-[17px] w-12 items-center justify-between rounded border border-[#777b8c] bg-[#9da0b0] px-1 text-[11px] text-[#484c5c]">
        WCS
        <svg viewBox="0 0 10 6" className="h-[6px] w-[10px] fill-none stroke-[#c6c8d4]"><path d="M1 .5h8L5 5z" /></svg>
      </button>
    </div>
  );
}

function NavBar() {
  return (
    <svg viewBox="0 0 32 212" className="absolute top-[165px] right-1 h-[212px] w-8 rounded bg-[#5f6467] fill-none stroke-[#474c50]" role="img" aria-label="导航栏">
      <circle cx="26" cy="5" r="3.500" fill="#474c50" />
      <path d="m24.500 3.500 3 3M27.500 3.500l-3 3" stroke="#777" />
      <path d="M16 20h10v10A10.500 10.500 0 1 1 16 20z" />
      <circle cx="16" cy="30" r="6.500" /><circle cx="16" cy="30" r="4.500" />
      <path d="M13.500 49h5L16 52zM13.500 119h5L16 122zM13.500 157h5L16 160z" fill="#42474a" />
      <path d="M3 57h26M3 165h26" stroke="#70757a" />
      <path d="M11 83C10 78 6 76 5 73c2-2 4 0 5 2L8 65c1-2 2.500-1 3 0l2 6V63c1-2 2.500-1 3 0l.5 8L19 63c1-1 2.500 0 2 1l-1 8 3-5c1-1 2 0 2 1l-3 10-1 5z" />
      <path d="M5 91l13 13M18 91 5 104M5 95v-4h4M14 91h4v4M5 100v4h4" strokeWidth="1.500" />
      <circle cx="20" cy="105" r="5" fill="#5f6467" strokeWidth="1.500" />
      <path d="m24 109 4 4" strokeWidth="3" />
      <path d="M14 150v-17h-2.500L16 127l4.500 6H18v17z" />
      <path d="M8 144c-4-2-4-6 8-6.500s14 5 4 7M12 140l-5 3.500 5 3" strokeWidth="1.500" />
      <path d="M4.500 169.500h5v6h-5zM12.500 169.500h5v6h-5zM20.500 169.500h5v6h-5zM4.500 178.500h16v13h-16z" />
      <path d="m9 181 7 4-7 4z" fill="#42474a" />
      <circle cx="26" cy="206" r="3.500" fill="#474c50" /><path d="M24 206h4" stroke="#777" />
    </svg>
  );
}

function Canvas() {
  return (
    <main className="relative min-w-0 flex-1 overflow-hidden bg-[#212830] bg-[linear-gradient(to_right,#262d37_1px,transparent_1px),linear-gradient(to_bottom,#262d37_1px,transparent_1px)] bg-[size:170px_170px] bg-[position:160px_139px]">
      <p className="relative px-[3px] pt-[3px] text-[12px] leading-[20px] text-white">[−][俯视][二维线框]</p>
      <span className="absolute inset-y-0 left-[499px] w-px bg-[#303848]" />
      {/* 圖形內容 */}
      <svg className="absolute top-[144px] left-[404px] h-[145px] w-[375px] fill-none stroke-[#e6e6e6]" viewBox="0 0 375 145">
        <path d="M1.500 1.500h372v142h-372z" />
      </svg>
      <span className="absolute top-[206px] left-[813px] size-[7px] border border-white" />
      <div className="absolute top-[226px] left-[832px] flex h-[25px] w-[136px] items-start justify-between border border-black bg-[#989898] pr-1 pl-[3px] text-[12px] leading-[20px] text-black">
        选择第一个对象或
        <svg viewBox="0 0 11 11" className="mt-2 size-[11px]"><path d="M0 0h11v11H0z" fill="#1a1fb5" /><path d="M0 0h10v10H0z" fill="#dfe3ee" /><path d="M5 2v4M3 4.500 5 6.500l2-2M2.500 8.500h5" stroke="#222" fill="none" /></svg>
      </div>
      <ViewCube />
      <NavBar />
      {/* UCS 座標圖示 */}
      <svg viewBox="0 0 76 80" className="absolute bottom-[6px] left-[8px] h-20 w-[76px] fill-none stroke-[#e0e0e0]" role="img" aria-label="UCS">
        <path d="M6.500 71.500V22M6.500 71.500H57M2.500 66.500h9v9h-9z" />
        <path d="m8 4 6 6.500L20 4M14 10.500V17M61 57.500l13 13M74 57.500l-13 13" strokeWidth="1.200" />
      </svg>
      <CommandLine />
    </main>
  );
}

// 狀態列圖示 (20x20)
const S = '#b9b9b9';
const A = '#3ca0ff';
const person = 'M10 3l2 6 5 6-2 2-5-5-5 5-2-2 5-6z';
const statusGroups: { id: string; art: ReactNode }[][] = [
  [
    { id: '栅格', art: <path d="M4.500 2v16M8.500 2v16M12.500 2v16M16.500 2v16M2 4.500h16M2 8.500h16M2 12.500h16M2 16.500h16" stroke={A} /> },
    { id: '捕捉', art: <path d="M3 4.500h14M3 8.500h14M3 12.500h14M3 16.500h14" stroke={S} strokeDasharray="1 2" /> },
    { id: '>', art: null },
  ],
  [
    { id: '正交', art: <path d="M4.500 3v13.500H18M4.500 11.500h5v5" stroke={S} /> },
    { id: '极轴', art: <path d="M15 5.500a7 7 0 1 0 1.500 5H10l4.500-6M10 10.500h9" stroke={A} strokeWidth="1.500" /> },
    { id: '>', art: null },
    { id: '等轴测', art: <path d="M2 2l16 16M10 2v16M2 7l6 5" stroke={S} /> },
    { id: '>', art: null },
  ],
  [
    { id: '对象追踪', art: <path d="M3 17h15M3 17 17 4M7 12l3 3" stroke={A} strokeWidth="1.500" /> },
    { id: '对象捕捉', art: <><path d="M4 5h12v12H4z" stroke={A} strokeWidth="1.500" /><path d="M2 2h4v4H2z" fill="#19d219" stroke="#063" /></> },
    { id: '>', art: null },
  ],
  [
    { id: '注释可见性', art: <><path d={person} fill={A} /><circle cx="15" cy="4" r="2.500" stroke={A} /></> },
    { id: '自动缩放', art: <><path d={person} fill={S} /><path d="m16 1-3 4h4l-3 4" stroke={S} /></> },
    { id: '注释比例', art: <path d={person} fill={S} /> },
    { id: '1:1', art: null },
    { id: '>', art: null },
  ],
  [
    { id: '切换工作空间', art: <><circle cx="10" cy="10" r="4" stroke={S} strokeWidth="3" /><circle cx="10" cy="10" r="6" stroke={S} strokeWidth="2" strokeDasharray="2.400 2.300" /></> },
    { id: '>', art: null },
  ],
  [{ id: '注释监视器', art: <path d="M10 3v14M3 10h14" stroke={S} strokeWidth="2" /> }],
  [{ id: '隔离对象', art: <><path d="M4 3h6v6H4zM9 12l3 5H6z" stroke={S} /><circle cx="15" cy="9" r="3" stroke={S} /></> }],
  [{ id: '硬件加速', art: <><circle cx="10" cy="10" r="7.500" fill="#0b559c" stroke="#1c86ee" strokeWidth="1.500" /><path d="m8 12 5-4" stroke="#7fc0ff" /></> }],
  [
    { id: '全屏显示', art: <><path d="M2.500 4.500h15v11h-15z" stroke="#ddd" /><path d="M5 13l3-3M5 9.500V13h3.500M15 7l-3 3M11.500 7H15v3.500" stroke="#ddd" strokeWidth="1.200" /></> },
    { id: '自定义', art: <path d="M2 5h16M2 10h16M2 15h16" stroke="#ccc" strokeWidth="2" /> },
  ],
];

const cell = 'flex h-[26px] items-center border border-[#6f6f6f] bg-[#484848]';

function StatusBar() {
  return (
    <footer className="flex h-[29px] items-start justify-between border-b border-[#555] bg-[#373737] pt-[1px]">
      <div className="flex pl-3 text-[12px] whitespace-nowrap text-[#a5a5a5]">
        {['模型', '布局1', '布局2'].map((t, i) => (
          <button
            key={t}
            type="button"
            className={`h-[17px] leading-[17px] [clip-path:polygon(0_0,100%_0,calc(100%-8px)_100%,8px_100%)] ${i === 0 ? 'w-[46px] bg-linear-to-b from-[#555] to-[#8a8a8a] font-bold text-white' : 'w-[54px] bg-[#505050]'}`}
          >
            {t}
          </button>
        ))}
        <button type="button" aria-label="新建布局" className="ml-[5px] flex h-[17px] w-[22px] items-center justify-center rounded-t rounded-br-lg bg-[#505050]">
          <svg viewBox="0 0 8 8" className="size-2 stroke-[#ccc] stroke-2"><path d="M4 0v8M0 4h8" /></svg>
        </button>
      </div>
      <div className="flex pr-[1px] text-[12px] text-white">
        <button type="button" className={`${cell} px-[2px]`}>模型</button>
        {statusGroups.map((group, g) => (
          <div key={g} className={`${cell} px-[1px]`}>
            {group.map((item, i) => {
              if (item.id === '>') return <span key={i} className="flex w-[15px] justify-center"><Caret /></span>;
              if (item.id === '1:1') return <button key={i} type="button" className="w-[19px]">1:1</button>;
              return (
                <button key={i} type="button" aria-label={item.id} className="flex w-[23px] justify-center">
                  <svg viewBox="0 0 20 20" className="size-5 fill-none">{item.art}</svg>
                </button>
              );
            })}
          </div>
        ))}
      </div>
    </footer>
  );
}

// 工作列應用程式圖示 (24x24)
const apps: { id: string; open: boolean; active?: boolean; art: ReactNode }[] = [
  {
    id: '视频', open: false,
    art: <><rect width="24" height="24" rx="5" fill="#4aa4f5" /><circle cx="12" cy="12" r="8" fill="none" stroke="#fff" strokeWidth="1.500" /><g fill="#fff"><circle cx="9" cy="9" r="1.700" /><circle cx="15" cy="9" r="1.700" /><circle cx="9" cy="15" r="1.700" /><circle cx="15" cy="15" r="1.700" /><circle cx="12" cy="12" r="1" /></g><path d="M16 19c3 1 5 0 7-2" stroke="#fff" fill="none" strokeWidth="1.500" /></>,
  },
  {
    id: '此电脑', open: false,
    art: <><path d="M7 2 22 5v12L7 13z" fill="#2b9ae8" stroke="#9bd0f5" strokeWidth=".7" /><path d="m7 14 14 4-3 2H5z" fill="#d9d9d9" /><path d="m1 18 11 3-3 2-9-3z" fill="#eee" /></>,
  },
  {
    id: '微信', open: true,
    art: <><ellipse cx="9" cy="9.500" rx="9" ry="7.500" fill="#83d13d" /><path d="m3 14 0 5 4-3z" fill="#83d13d" /><ellipse cx="17" cy="15" rx="7" ry="6" fill="#f1f1f1" /><path d="m21 19 1 4-4-2z" fill="#f1f1f1" /><g fill="#333"><circle cx="6" cy="7.500" r="1.200" /><circle cx="12" cy="7.500" r="1.200" /><circle cx="14.500" cy="13.500" r="1" /><circle cx="19.500" cy="13.500" r="1" /></g></>,
  },
  {
    id: '手机助手', open: true,
    art: <><rect width="24" height="24" rx="4" fill="#1795ee" /><path d="M4.500 4.500c2.500 0 3 1 4 2h7c1-1 1.500-2 4-2 0 2-1 3-1.500 4V13a6 6 0 0 1-12 0V8.500c-.5-1-1.500-2-1.500-4z" fill="#fff" /><path d="M9.500 9.500h5V14a2.500 2.500 0 0 1-5 0z" fill="#1795ee" /></>,
  },
  {
    id: 'Word', open: true,
    art: <><path d="M4 1h18v21H2V4z" fill="#f4f7fc" /><path d="M2 4h15v14H2z" fill="#2a5db0" /><path d="m4 7 2.500 8L9.500 8l3 7L15 7" stroke="#fff" strokeWidth="2" fill="none" /><path d="m14 16 4-3 4 3v6h-7z" fill="#dce6f5" /></>,
  },
  {
    id: 'AutoCAD', open: true, active: true,
    art: <><path d="M0 0h24v24H0z" fill="#fbe6e1" /><path d="M10 3h5l5 17-4 1-2-5-5 1-1 4-4-1z" fill="#c4232a" /><path d="m12 9 1.500 5-4 .5z" fill="#fbe6e1" /><path d="m15 3 5 17-4 1-4-15z" fill="#8f1820" /></>,
  },
  {
    id: '文件资源管理器', open: true,
    art: <><path d="M1 3h8l2 3h12v15H1z" fill="#ffd35a" /><path d="M1 3h8l1.500 3H1z" fill="#e09e1b" /><path d="M5 13h14v8h-4v-4H9v4H5z" fill="#2f8fd8" /></>,
  },
  {
    id: '手机', open: true,
    art: <><circle cx="12" cy="12" r="12" fill="#1a7ad4" /><rect x="7" y="3.500" width="10" height="17" rx="1.500" fill="#fff" /><path d="M8.500 5.500h7V17h-7z" fill="#2a8be0" /></>,
  },
];

function Taskbar() {
  return (
    <footer className="flex h-10 items-stretch justify-between bg-[#1d272b] text-white">
      <div className="flex">
        <button type="button" aria-label="开始" className="flex w-12 items-center justify-center">
          <svg viewBox="0 0 16 16" className="size-4 fill-white"><path d="M0 2.300 6.500 1.400v6.100H0zM7.500 1.200 16 0v7.500H7.500zM0 8.500h6.500v6.100L0 13.700zM7.500 8.500H16V16l-8.500-1.200z" /></svg>
        </button>
        <button type="button" aria-label="搜索" className="flex w-12 items-center justify-center">
          <svg viewBox="0 0 16 16" className="size-4 fill-none stroke-white"><circle cx="10.500" cy="5.500" r="5" strokeWidth="1.200" /><path d="M7 9 .5 15.500" strokeWidth="1.500" /></svg>
        </button>
        <button type="button" aria-label="Cortana" className="flex w-12 items-center justify-center">
          <svg viewBox="0 0 16 16" className="size-4 fill-none stroke-white stroke-2"><circle cx="8" cy="8" r="6.800" /></svg>
        </button>
        <button type="button" aria-label="任务视图" className="mr-[3px] flex w-12 items-center justify-center">
          <svg viewBox="0 0 16 16" className="size-4 fill-none stroke-white"><path d="M.5 1v2.500h11V1M.500 5.500h11v5H.500zM.5 15.500v-2.500h11v2.500M14.500 1v15" strokeWidth="1.200" /><path d="M13 5h3v3h-3z" fill="#fff" stroke="none" /></svg>
        </button>
        {apps.map((a) => (
          <button key={a.id} type="button" aria-label={a.id} className={`mr-[1px] flex w-12 flex-col items-center ${a.active ? 'bg-[#4b5456]' : ''}`}>
            <span className="flex flex-1 items-center"><svg viewBox="0 0 24 24" className="size-6">{a.art}</svg></span>
            {a.open && <span className={`h-[2px] bg-[#76b9ed] ${a.active ? 'w-full' : 'w-10'}`} />}
          </button>
        ))}
      </div>
      <div className="flex items-center pr-[17px]">
        <svg viewBox="0 0 12 8" className="h-2 w-3 fill-none stroke-white"><path d="m1 7 5-5 5 5" strokeWidth="1.300" /></svg>
        <svg viewBox="0 0 16 16" className="ml-[11px] size-4 fill-none stroke-white"><path d="M.5 4.500h13v8H.500z" /><path d="M2.500 6.500h7v4h-7z" fill="#fff" /><path d="M14.500 7v3" /></svg>
        <svg viewBox="0 0 16 16" className="ml-2 size-4 fill-none stroke-[#aaa]"><path d="M3 14.500C3 8 8 3 14.500 3M6 14.500c0-5 3.500-8.500 8.500-8.500M9 14.500c0-3 2.500-5.500 5.500-5.500" /><path d="M12 14.500c0-1.500 1-2.500 2.500-2.500v2.500z" fill="#fff" stroke="#fff" /></svg>
        <svg viewBox="0 0 16 16" className="ml-[6px] size-4 fill-none stroke-white"><path d="M.5 5.500H3L6.500 2v12L3 10.500H.500zM9 6c1 1.200 1 2.800 0 4M11 4c2 2.500 2 5.500 0 8M13 2c3.300 3.500 3.300 8.500 0 12" /></svg>
        <span className="ml-2 text-[16px]">英</span>
        <span className="ml-[14px] flex size-[14px] items-center justify-center bg-white text-[13px] leading-none font-bold text-black">五</span>
        <time className="ml-[18px] flex flex-col text-center text-[12px] leading-[19px]">
          <span>8:38</span>
          <span>2020/5/10</span>
        </time>
        <svg viewBox="0 0 24 24" className="ml-5 size-6" role="img" aria-label="通知"><path d="M1 2h15v12H8l-3 3v-3H1z" fill="#fff" /><path d="M4 5.500h9M4 8.500h9M4 11.500h5" stroke="#1d272b" /><circle cx="16" cy="16" r="7.500" fill="#333c40" stroke="#ccc" /><text x="16" y="20" fontSize="12" textAnchor="middle" fill="#fff">1</text></svg>
      </div>
    </footer>
  );
}

function Watermark() {
  return (
    <div className="pointer-events-none absolute right-[75px] bottom-[32px] z-20 flex flex-col text-[#d5d7d9]/90">
      <div className="flex items-end pb-[5px]">
        <span className="font-['Roboto',sans-serif] text-[58px] leading-[56px] font-bold">Bai</span>
        <svg viewBox="0 0 72 78" className="h-[78px] w-[72px]" role="img" aria-label="Baidu">
          <g fill="#d5d7d9" fillOpacity=".9">
            <ellipse cx="11" cy="30" rx="9" ry="12" transform="rotate(-8 11 30)" />
            <ellipse cx="28" cy="13" rx="9" ry="12.500" />
            <ellipse cx="49" cy="14" rx="9" ry="12" transform="rotate(10 49 14)" />
            <ellipse cx="63" cy="36" rx="9" ry="12" transform="rotate(8 63 36)" />
            <path d="M36 31c10 0 14 10 21 17 10 10 9 27-8 27-6 0-8-2-13-2s-8 2-14 2C5 75 4 58 14 49c8-7 12-18 22-18z" />
          </g>
          <g fill="none" stroke="#343a42" strokeWidth="4">
            <circle cx="25" cy="60" r="6" /><path d="M32 45v23M41 53v9c0 5 9 5 9 0v-9M50 53v15" />
          </g>
        </svg>
        <span className="pl-[3px] text-[40px] leading-[50px] font-bold">经验</span>
      </div>
      <span className="text-[27px] leading-[32px] font-medium">jingyan.baidu.com</span>
    </div>
  );
}

// 桌面圖示標籤露出的部分
const desktopLabels = [['', '2'], ['c', '2'], ['S', '2'], ['S', 'C'], ['S', '']];

export default function App() {
  return (
    <div className="relative flex min-h-screen flex-col overflow-hidden bg-black font-['Noto_Sans','Noto_Sans_CJK_SC',sans-serif]">
      <div className="absolute top-0 left-[861px] flex h-1 w-[72px] justify-end rounded-b bg-[#7fb4d8]">
        <span className="mr-[1px] h-1 w-3 bg-[#41cf2c]" />
      </div>
      <div className="flex flex-1 bg-[linear-gradient(to_bottom,#000_60%,#06222e_68%,#0b4256_85%,#0c3a4c)]">
        <aside className="flex w-2 shrink-0 flex-col overflow-hidden bg-[linear-gradient(to_bottom,#000_60%,#08404c_71%,#3ccfdf_72%,#1ba7c4_78%,#135a86_85%,#0b3347)] pt-[130px] pl-1 text-[12px] leading-[17px] text-[#d8dcc8]">
          {desktopLabels.map(([a, b], i) => (
            <span key={i} className="flex h-[88px] shrink-0 flex-col"><span className="h-[17px]">{a}</span><span>{b}</span></span>
          ))}
        </aside>
        <div className="flex min-w-0 flex-1 flex-col pt-[5px] pb-[6px]">
          <TitleBar />
          <MenuBar />
          <Ribbon />
          <FileTabs />
          <Toolbars />
          <div className="flex flex-1 bg-[#5c5c5c]">
            <div className="flex items-start pr-1"><VerticalBar tools={drawTools} /></div>
            <Canvas />
            <div className="flex flex-col gap-[1px] pr-[3px] pl-1">
              <VerticalBar tools={modifyTools} />
              <VerticalBar tools={orderTools} more />
            </div>
          </div>
          <StatusBar />
        </div>
        <aside className="flex w-3 shrink-0 flex-col justify-end border-r-2 border-[#9c5a2a] bg-[linear-gradient(to_bottom,#000_66%,#08354a_68%,#0d4a68_85%,#0b2c40)] pb-[76px] pl-1">
          <span className="h-8 w-[5px] rounded-t bg-[#5c7484]" />
          <span className="h-4 w-[5px] rounded-b bg-[#5cd400]" />
        </aside>
      </div>
      <Taskbar />
      <Watermark />
    </div>
  );
}
